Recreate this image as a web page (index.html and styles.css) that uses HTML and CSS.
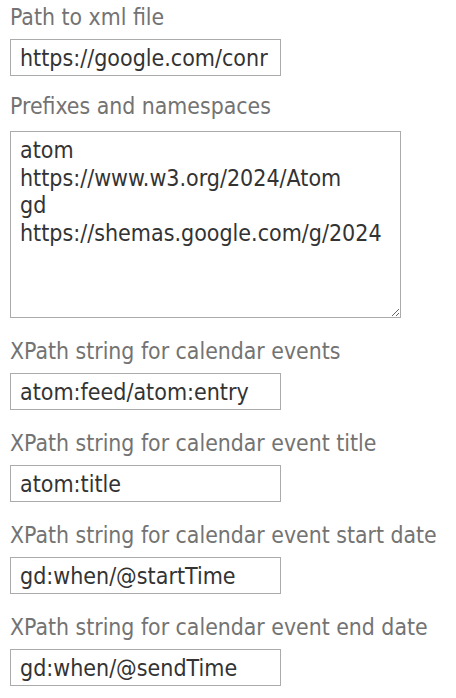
FILE: index.html
```html
<!DOCTYPE html>
<html lang="en">
<head>
<meta charset="utf-8">
<title>Calendar XML settings</title>
<link rel="stylesheet" href="styles.css">
</head>
<body>
<form class="settings">
  <div class="field field-first">
    <label class="field-label" for="path">Path to xml file</label>
    <input class="text-input" id="path" type="text" value="https://google.com/conr">
  </div>
  <div class="field">
    <label class="field-label" for="ns">Prefixes and namespaces</label>
    <textarea class="text-area" id="ns">atom
https://www.w3.org/2024/Atom
gd
https://shemas.google.com/g/2024</textarea>
  </div>
  <div class="field">
    <label class="field-label" for="events">XPath string for calendar events</label>
    <input class="text-input" id="events" type="text" value="atom:feed/atom:entry">
  </div>
  <div class="field">
    <label class="field-label" for="title">XPath string for calendar event title</label>
    <input class="text-input" id="title" type="text" value="atom:title">
  </div>
  <div class="field">
    <label class="field-label" for="start">XPath string for calendar event start date</label>
    <input class="text-input" id="start" type="text" value="gd:when/@startTime">
  </div>
  <div class="field">
    <label class="field-label" for="end">XPath string for calendar event end date</label>
    <input class="text-input" id="end" type="text" value="gd:when/@sendTime">
  </div>
</form>
</body>
</html>
```
FILE: styles.css
```css
html, body {
  margin: 0;
  padding: 0;
  background: #ffffff;
}

body {
  font-family: "DejaVu Sans Condensed", "DejaVu Sans", sans-serif;
  font-size: 23px;
}

.settings {
  padding: 5px 0 0 10px;
}

.field {
  display: flex;
  flex-direction: column;
  align-items: flex-start;
  margin-bottom: 21px;
}

.field-first {
  margin-bottom: 18px;
}

.field-label {
  display: block;
  height: 24px;
  line-height: 24px;
  font-size: 22.8px;
  color: #737373;
  margin-bottom: 10px;
  white-space: nowrap;
}

.text-input {
  box-sizing: border-box;
  width: 271px;
  height: 37px;
  margin: 0;
  padding: 0 4px 0 9px;
  border: 1px solid #ababab;
  border-radius: 0;
  font-family: inherit;
  font-size: 23px;
  color: #333333;
  background: #ffffff;
  outline: none;
}

.text-area {
  box-sizing: border-box;
  width: 391px;
  height: 187px;
  margin: 3px 0 0 0;
  padding: 5px 9px;
  border: 1px solid #ababab;
  border-radius: 0;
  font-family: inherit;
  font-size: 23px;
  line-height: 27.5px;
  color: #333333;
  background: #ffffff;
  outline: none;
}
```
